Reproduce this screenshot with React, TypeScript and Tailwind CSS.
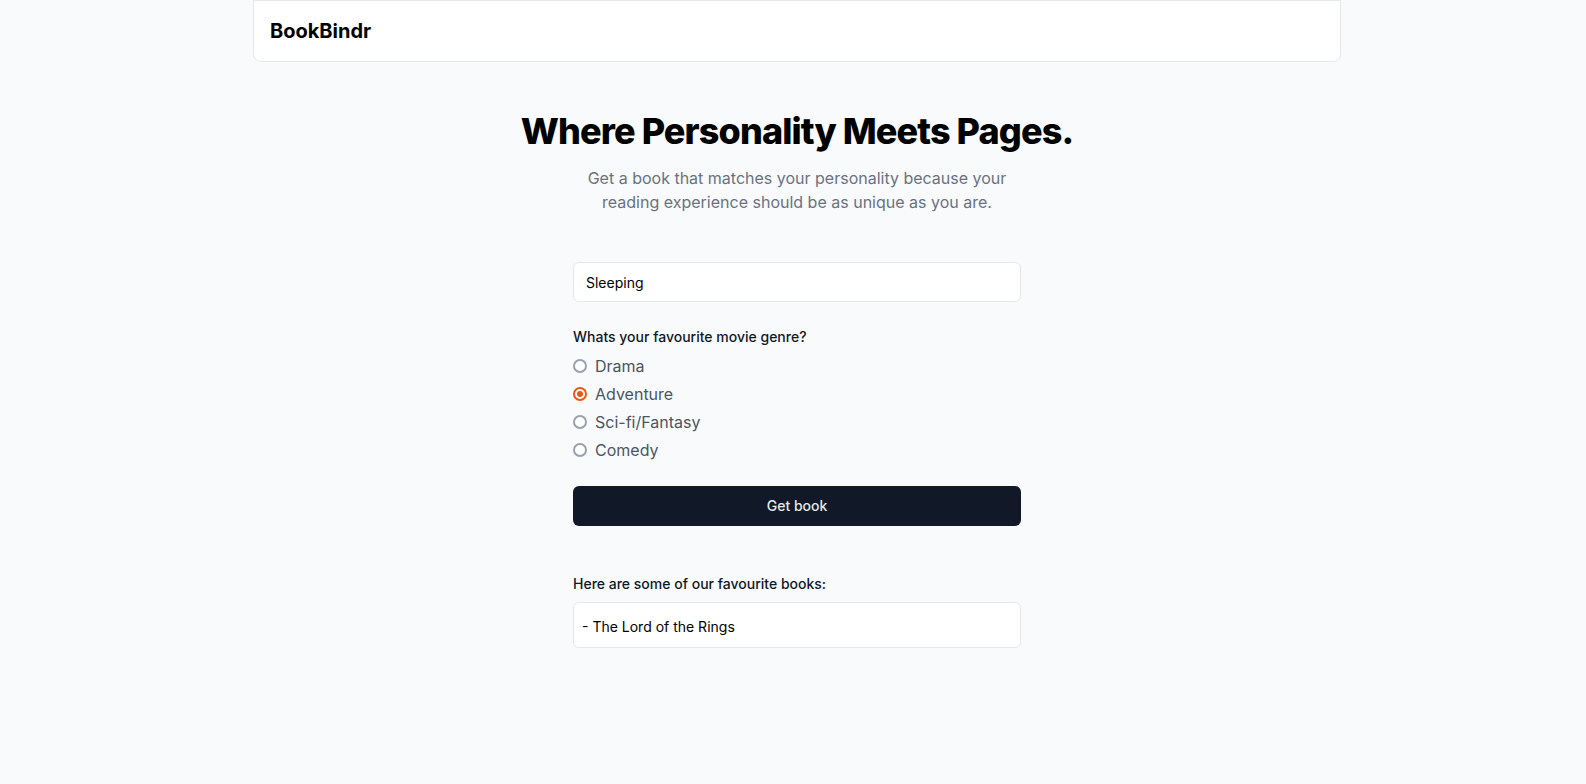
import { useState } from 'react'

const genres = ['Drama', 'Adventure', 'Sci-fi/Fantasy', 'Comedy']

export default function App() {
  const [genre, setGenre] = useState('Adventure')

  return (
    <main
      className="min-h-screen bg-[#f9fafb] pl-2 text-gray-900"
      style={{ fontFamily: 'Inter, "Noto Sans", sans-serif' }}
    >
      <header className="mx-auto flex h-[62px] w-[1088px] items-center rounded-b-lg border border-gray-200 bg-white px-4">
        <span className="text-xl font-bold text-black">BookBindr</span>
      </header>

      <section className="mx-auto mt-[49px] flex flex-col items-center">
        <h1 className="text-4xl font-extrabold tracking-tight text-black">
          Where Personality Meets Pages.
        </h1>
        <p className="mt-[15px] max-w-md text-center text-base leading-6 text-gray-500">
          Get a book that matches your personality because your reading experience should be as unique as you are.
        </p>

        <div className="mt-12 w-[448px]">
          <input
            defaultValue="Sleeping"
            className="h-10 w-full rounded-md border border-gray-200 bg-white px-3 text-sm text-black outline-none"
          />

          <p className="mt-[25px] text-sm font-medium text-gray-900">Whats your favourite movie genre?</p>
          <div className="mt-[7px] flex flex-col gap-1">
            {genres.map((g) => (
              <label key={g} className="flex h-6 cursor-pointer items-center gap-2" onClick={() => setGenre(g)}>
                <span
                  className={
                    g === genre
                      ? 'flex h-[14px] w-[14px] items-center justify-center rounded-full border-2 border-[#ea580c] bg-white'
                      : 'h-[14px] w-[14px] rounded-full border-2 border-gray-400 bg-white'
                  }
                >
                  {g === genre && <span className="h-[6px] w-[6px] rounded-full bg-[#ea580c]" />}
                </span>
                <span className="text-base text-gray-600">{g}</span>
              </label>
            ))}
          </div>

          <button className="mt-6 h-10 w-full rounded-md bg-[#111827] text-sm font-medium text-gray-200">
            Get book
          </button>

          <p className="mt-12 text-sm font-medium text-gray-900">Here are some of our favourite books:</p>
          <div className="mt-2 h-[46px] rounded-md border border-gray-200 bg-white px-2 pt-[14px] text-sm leading-5 text-black">
            - The Lord of the Rings
          </div>
        </div>
      </section>
    </main>
  )
}
